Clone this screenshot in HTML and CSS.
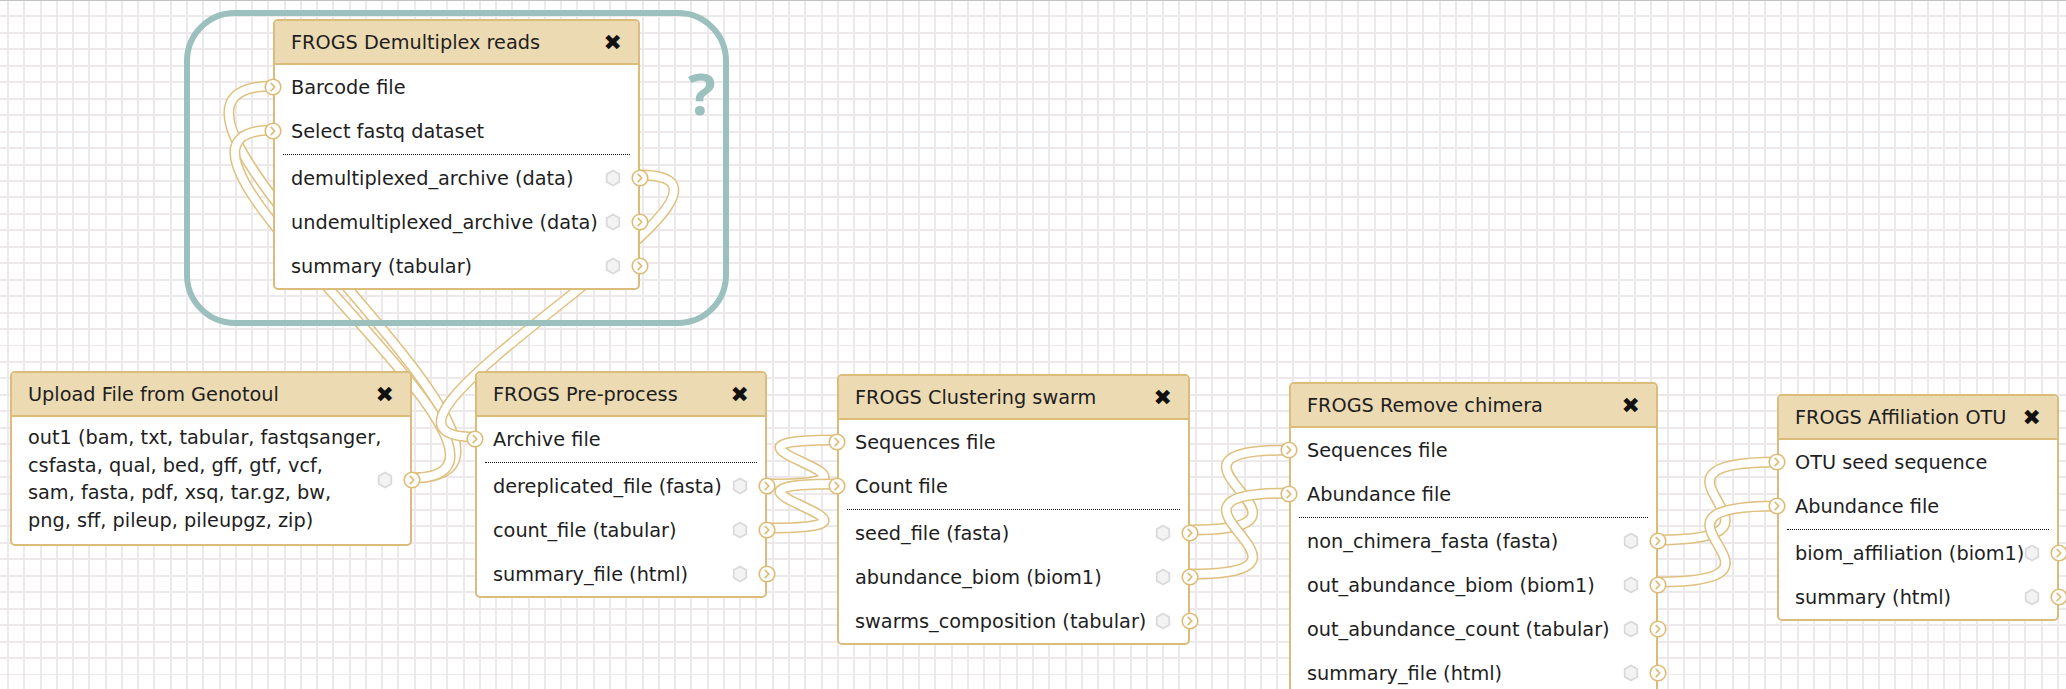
FILE: index.html
```html
<!DOCTYPE html>
<html lang="en">
<head>
    <meta charset="UTF-8">
    <title>Workflow Editor</title>
    <link rel="stylesheet" href="styles.css">
</head>
<body>
    <svg class="icon-defs" width="0" height="0">
        <symbol id="terminal-icon" viewBox="0 0 18 18">
            <circle cx="9" cy="9" r="7.8" fill="#fff" stroke="#dcbb76" stroke-width="1.6"/>
            <path d="M7.2 5.4 L10.8 9 L7.2 12.6" fill="none" stroke="#dcbb76" stroke-width="1.7" stroke-linecap="round" stroke-linejoin="round"/>
        </symbol>
        <symbol id="callout-icon" viewBox="0 0 18 18">
            <path d="M9 1.5 L15.3 5.1 L15.3 12.9 L9 16.5 L2.7 12.9 L2.7 5.1 Z" fill="#f3f3f3" stroke="#dadada" stroke-width="1.8" stroke-linejoin="round"/>
        </symbol>
    </svg>

    <div class="canvas">
        <!-- connectors: outer gold line with a white inner line -->
        <svg class="wires" width="2066" height="689">
            <g class="wire"><path d="M412 478 C608 478 77 86 273 86"/><path d="M412 478 C608 478 77 86 273 86"/></g>
            <g class="wire"><path d="M412 478 C586 478 99 130 273 130"/><path d="M412 478 C586 478 99 130 273 130"/></g>
            <g class="wire"><path d="M640 175 C804 175 311 437 475 437"/><path d="M640 175 C804 175 311 437 475 437"/></g>
            <g class="wire"><path d="M767 484 C931 484 673 440 837 440"/><path d="M767 484 C931 484 673 440 837 440"/></g>
            <g class="wire"><path d="M767 528 C931 528 673 484 837 484"/><path d="M767 528 C931 528 673 484 837 484"/></g>
            <g class="wire"><path d="M1190 530 C1354 530 1125 450 1289 450"/><path d="M1190 530 C1354 530 1125 450 1289 450"/></g>
            <g class="wire"><path d="M1190 574 C1354 574 1125 493 1289 493"/><path d="M1190 574 C1354 574 1125 493 1289 493"/></g>
            <g class="wire"><path d="M1658 540 C1822 540 1613 462 1777 462"/><path d="M1658 540 C1822 540 1613 462 1777 462"/></g>
            <g class="wire"><path d="M1658 582 C1822 582 1613 506 1777 506"/><path d="M1658 582 C1822 582 1613 506 1777 506"/></g>
        </svg>

        <div class="node node-demultiplex">
            <div class="node-title"><span>FROGS Demultiplex reads</span><span class="node-close">&#10006;</span></div>
            <div class="row input"><svg class="terminal"><use href="#terminal-icon"/></svg>Barcode file</div>
            <div class="row input"><svg class="terminal"><use href="#terminal-icon"/></svg>Select fastq dataset</div>
            <div class="rule"></div>
            <div class="row output">demultiplexed_archive (data)<svg class="callout"><use href="#callout-icon"/></svg><svg class="terminal"><use href="#terminal-icon"/></svg></div>
            <div class="row output">undemultiplexed_archive (data)<svg class="callout"><use href="#callout-icon"/></svg><svg class="terminal"><use href="#terminal-icon"/></svg></div>
            <div class="row output">summary (tabular)<svg class="callout"><use href="#callout-icon"/></svg><svg class="terminal"><use href="#terminal-icon"/></svg></div>
        </div>

        <div class="node node-upload">
            <div class="node-title"><span>Upload File from Genotoul</span><span class="node-close">&#10006;</span></div>
            <div class="row output multi">
                <span>out1 (bam, txt, tabular, fastqsanger,<br>csfasta, qual, bed, gff, gtf, vcf,<br>sam, fasta, pdf, xsq, tar.gz, bw,<br>png, sff, pileup, pileupgz, zip)</span>
                <svg class="callout"><use href="#callout-icon"/></svg><svg class="terminal"><use href="#terminal-icon"/></svg>
            </div>
        </div>

        <div class="node node-preprocess">
            <div class="node-title"><span>FROGS Pre-process</span><span class="node-close">&#10006;</span></div>
            <div class="row input"><svg class="terminal"><use href="#terminal-icon"/></svg>Archive file</div>
            <div class="rule"></div>
            <div class="row output">dereplicated_file (fasta)<svg class="callout"><use href="#callout-icon"/></svg><svg class="terminal"><use href="#terminal-icon"/></svg></div>
            <div class="row output">count_file (tabular)<svg class="callout"><use href="#callout-icon"/></svg><svg class="terminal"><use href="#terminal-icon"/></svg></div>
            <div class="row output">summary_file (html)<svg class="callout"><use href="#callout-icon"/></svg><svg class="terminal"><use href="#terminal-icon"/></svg></div>
        </div>

        <div class="node node-swarm">
            <div class="node-title"><span>FROGS Clustering swarm</span><span class="node-close">&#10006;</span></div>
            <div class="row input"><svg class="terminal"><use href="#terminal-icon"/></svg>Sequences file</div>
            <div class="row input"><svg class="terminal"><use href="#terminal-icon"/></svg>Count file</div>
            <div class="rule"></div>
            <div class="row output">seed_file (fasta)<svg class="callout"><use href="#callout-icon"/></svg><svg class="terminal"><use href="#terminal-icon"/></svg></div>
            <div class="row output">abundance_biom (biom1)<svg class="callout"><use href="#callout-icon"/></svg><svg class="terminal"><use href="#terminal-icon"/></svg></div>
            <div class="row output">swarms_composition (tabular)<svg class="callout"><use href="#callout-icon"/></svg><svg class="terminal"><use href="#terminal-icon"/></svg></div>
        </div>

        <div class="node node-chimera">
            <div class="node-title"><span>FROGS Remove chimera</span><span class="node-close">&#10006;</span></div>
            <div class="row input"><svg class="terminal"><use href="#terminal-icon"/></svg>Sequences file</div>
            <div class="row input"><svg class="terminal"><use href="#terminal-icon"/></svg>Abundance file</div>
            <div class="rule"></div>
            <div class="row output">non_chimera_fasta (fasta)<svg class="callout"><use href="#callout-icon"/></svg><svg class="terminal"><use href="#terminal-icon"/></svg></div>
            <div class="row output">out_abundance_biom (biom1)<svg class="callout"><use href="#callout-icon"/></svg><svg class="terminal"><use href="#terminal-icon"/></svg></div>
            <div class="row output">out_abundance_count (tabular)<svg class="callout"><use href="#callout-icon"/></svg><svg class="terminal"><use href="#terminal-icon"/></svg></div>
            <div class="row output">summary_file (html)<svg class="callout"><use href="#callout-icon"/></svg><svg class="terminal"><use href="#terminal-icon"/></svg></div>
        </div>

        <div class="node node-affiliation">
            <div class="node-title"><span>FROGS Affiliation OTU</span><span class="node-close">&#10006;</span></div>
            <div class="row input"><svg class="terminal"><use href="#terminal-icon"/></svg>OTU seed sequence</div>
            <div class="row input"><svg class="terminal"><use href="#terminal-icon"/></svg>Abundance file</div>
            <div class="rule"></div>
            <div class="row output">biom_affiliation (biom1)<svg class="callout"><use href="#callout-icon"/></svg><svg class="terminal"><use href="#terminal-icon"/></svg></div>
            <div class="row output">summary (html)<svg class="callout"><use href="#callout-icon"/></svg><svg class="terminal"><use href="#terminal-icon"/></svg></div>
        </div>

        <!-- hand-drawn annotation -->
        <svg class="annotation" width="2066" height="689">
            <rect x="187" y="13" width="539" height="310" rx="48" ry="48"/>
        </svg>
        <span class="annotation-mark">?</span>
    </div>
</body>
</html>
```

FILE: styles.css
```css
/* Page */
body {
    margin: 0;
    padding: 0;
    width: 2066px;
    height: 689px;
    overflow: hidden;
    font-family: "DejaVu Sans", Verdana, sans-serif;
    font-size: 19.3px;
    color: #1e1e1e;
    background-color: #fff;
}

.icon-defs {
    position: absolute;
}

/* Workflow canvas with its grid */
.canvas {
    position: relative;
    width: 2066px;
    height: 689px;
    border-top: 1px solid #c4c2c4;
    box-sizing: border-box;
    background-color: #fff;
    background-image:
        repeating-linear-gradient(to right, transparent 0 7px, #ede8ec 7px 9px, transparent 9px 16.27px),
        repeating-linear-gradient(to bottom, transparent 0 14.5px, #ede8ec 14.5px 16.45px);
}

/* Connectors */
.wires {
    position: absolute;
    left: 0;
    top: -1px;
}

.wire path {
    fill: none;
    stroke-linecap: round;
}

.wire path:first-child {
    stroke: #dfc07f;
    stroke-width: 11;
}

.wire path:last-child {
    stroke: #fff;
    stroke-width: 8;
}

/* Nodes */
.node {
    position: absolute;
    box-sizing: border-box;
    background-color: #fff;
    border: 2px solid #dcbc7b;
    border-radius: 5px;
}

.node-demultiplex { left: 273px; top: 18px; width: 367px; }
.node-upload { left: 10px; top: 370px; width: 402px; }
.node-preprocess { left: 475px; top: 370px; width: 292px; }
.node-swarm { left: 837px; top: 373px; width: 353px; }
.node-chimera { left: 1289px; top: 381px; width: 369px; }
.node-affiliation { left: 1777px; top: 393px; width: 282px; }

.node-title {
    display: flex;
    align-items: center;
    justify-content: space-between;
    height: 42px;
    padding: 0 16px 0 16px;
    background-color: #ecdab3;
    border-bottom: 2px solid #dcbc7b;
    border-radius: 3px 3px 0 0;
}

.node-close {
    font-size: 22px;
    color: #111;
}

.row {
    position: relative;
    display: flex;
    align-items: center;
    height: 44px;
    padding-left: 16px;
    white-space: nowrap;
}

.row.multi {
    height: auto;
    padding: 7px 16px 9px;
    line-height: 27.7px;
    white-space: normal;
}

.rule {
    margin: 1px 8px 1px;
    border-top: 1px dotted #111;
}

.terminal {
    position: absolute;
    top: 50%;
    width: 18px;
    height: 18px;
    margin-top: -9px;
}

.input .terminal {
    left: -11px;
}

.output .terminal {
    right: -11px;
}

.callout {
    position: absolute;
    top: 50%;
    right: 16px;
    width: 18px;
    height: 18px;
    margin-top: -9px;
}

/* Annotation drawn over the canvas */
.annotation {
    position: absolute;
    left: 0;
    top: -1px;
    pointer-events: none;
}

.annotation rect {
    fill: none;
    stroke: #9cc0be;
    stroke-width: 6;
}

.annotation-mark {
    position: absolute;
    left: 688px;
    top: 57px;
    font-family: "Open Sans", sans-serif;
    font-weight: bold;
    font-size: 58px;
    line-height: 70px;
    color: #9cc0be;
}
```
